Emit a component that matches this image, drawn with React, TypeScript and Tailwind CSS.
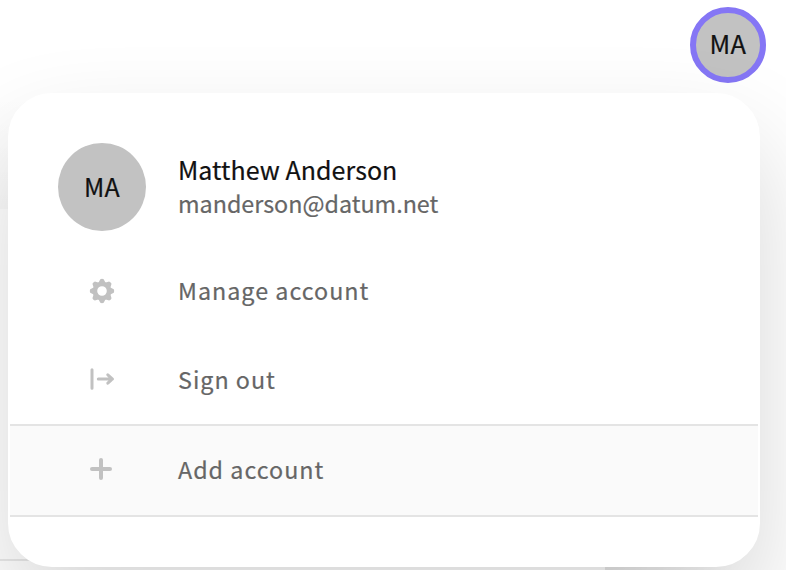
import type { ReactNode } from 'react';

function MenuRow({ icon, label, className = '' }: { icon: ReactNode; label: string; className?: string }) {
  return (
    <button className={`flex w-full items-center text-left text-[23.3px] tracking-[1px] text-[#666] ${className}`}>
      <span className="ml-12 flex w-[88px] justify-center text-[#c1c1c1]">{icon}</span>
      <span className="ml-8 leading-8">{label}</span>
    </button>
  );
}

const teeth = [0, 45, 90, 135, 180, 225, 270, 315];

function Gear() {
  return (
    <svg className="relative top-px" width="26" height="26" viewBox="0 0 26 26" fill="none" stroke="currentColor">
      <circle cx="13" cy="13" r="7" strokeWidth="4.4" />
      {teeth.map((a) => (
        <path key={a} d="M9.2 5.2 11.3 1.2Q13 .4 14.7 1.2l2.1 4Z" fill="currentColor" stroke="none" transform={`rotate(${a} 13 13)`} />
      ))}
    </svg>
  );
}

function SignOut() {
  return (
    <svg width="26" height="26" viewBox="0 0 26 26" fill="none" stroke="currentColor" strokeWidth="3" strokeLinecap="round" strokeLinejoin="round">
      <path d="M3 3.8v18.4M9.3 13h14M18.8 8.8 23.5 13l-4.7 4.2" />
    </svg>
  );
}

function Plus() {
  return (
    <svg width="26" height="26" viewBox="0 0 26 26" fill="none" stroke="currentColor" strokeWidth="4" strokeLinecap="round">
      <path d="M12 4v18M3 13h18" />
    </svg>
  );
}

export default function App() {
  return (
    <div className="relative h-[570px] w-[786px] overflow-hidden bg-white font-['Noto_Sans_CJK_SC','Noto_Sans',sans-serif] text-[#111] [-webkit-text-stroke:0.2px]">
      <div className="absolute left-0 top-[90px] h-[119px] w-10 bg-linear-to-b from-transparent to-black/[0.02]" />
      <div className="absolute left-0 top-[559px] h-[2px] w-[605px] bg-[#e9e9e9]" />
      <div className="absolute left-[605px] top-[560px] h-[10px] w-[130px] bg-linear-to-r from-black/[0.09] to-transparent" />
      <header className="flex justify-end pr-5 pt-[7px]">
        <div className="flex size-[76px] items-center justify-center rounded-full border-[6px] border-[#8576f5] bg-[#c2c2c2] pb-[5px] text-[25.5px] leading-8 tracking-[0.4px]">MA</div>
      </header>
      <main className="relative ml-2 mt-[10px] h-[474px] w-[752px] rounded-[44px] border-2 border-white bg-white shadow-[0_48px_100px_rgba(0,0,0,0.16)]">
        <div className="flex items-center pl-12 pt-12">
          <div className="flex size-[88px] items-center justify-center rounded-full bg-[#c2c2c2] pb-[2px] text-[25px] leading-8 tracking-[0.2px]">MA</div>
          <div className="ml-8 pb-[2px] text-[25px] leading-[34px]">
            <p className="tracking-[0.05px]">Matthew Anderson</p>
            <p className="text-[23.3px] text-[#666]">manderson@datum.net</p>
          </div>
        </div>
        <nav className="mt-[16px]">
          <MenuRow icon={<Gear />} label="Manage account" className="h-[88px] pb-[2px]" />
          <MenuRow icon={<SignOut />} label="Sign out" className="h-[89px] pb-[2px]" />
          <MenuRow icon={<Plus />} label="Add account" className="h-[93px] border-y-2 border-[#e4e4e4] bg-[#fafafa] pb-[3px]" />
        </nav>
      </main>
    </div>
  );
}
